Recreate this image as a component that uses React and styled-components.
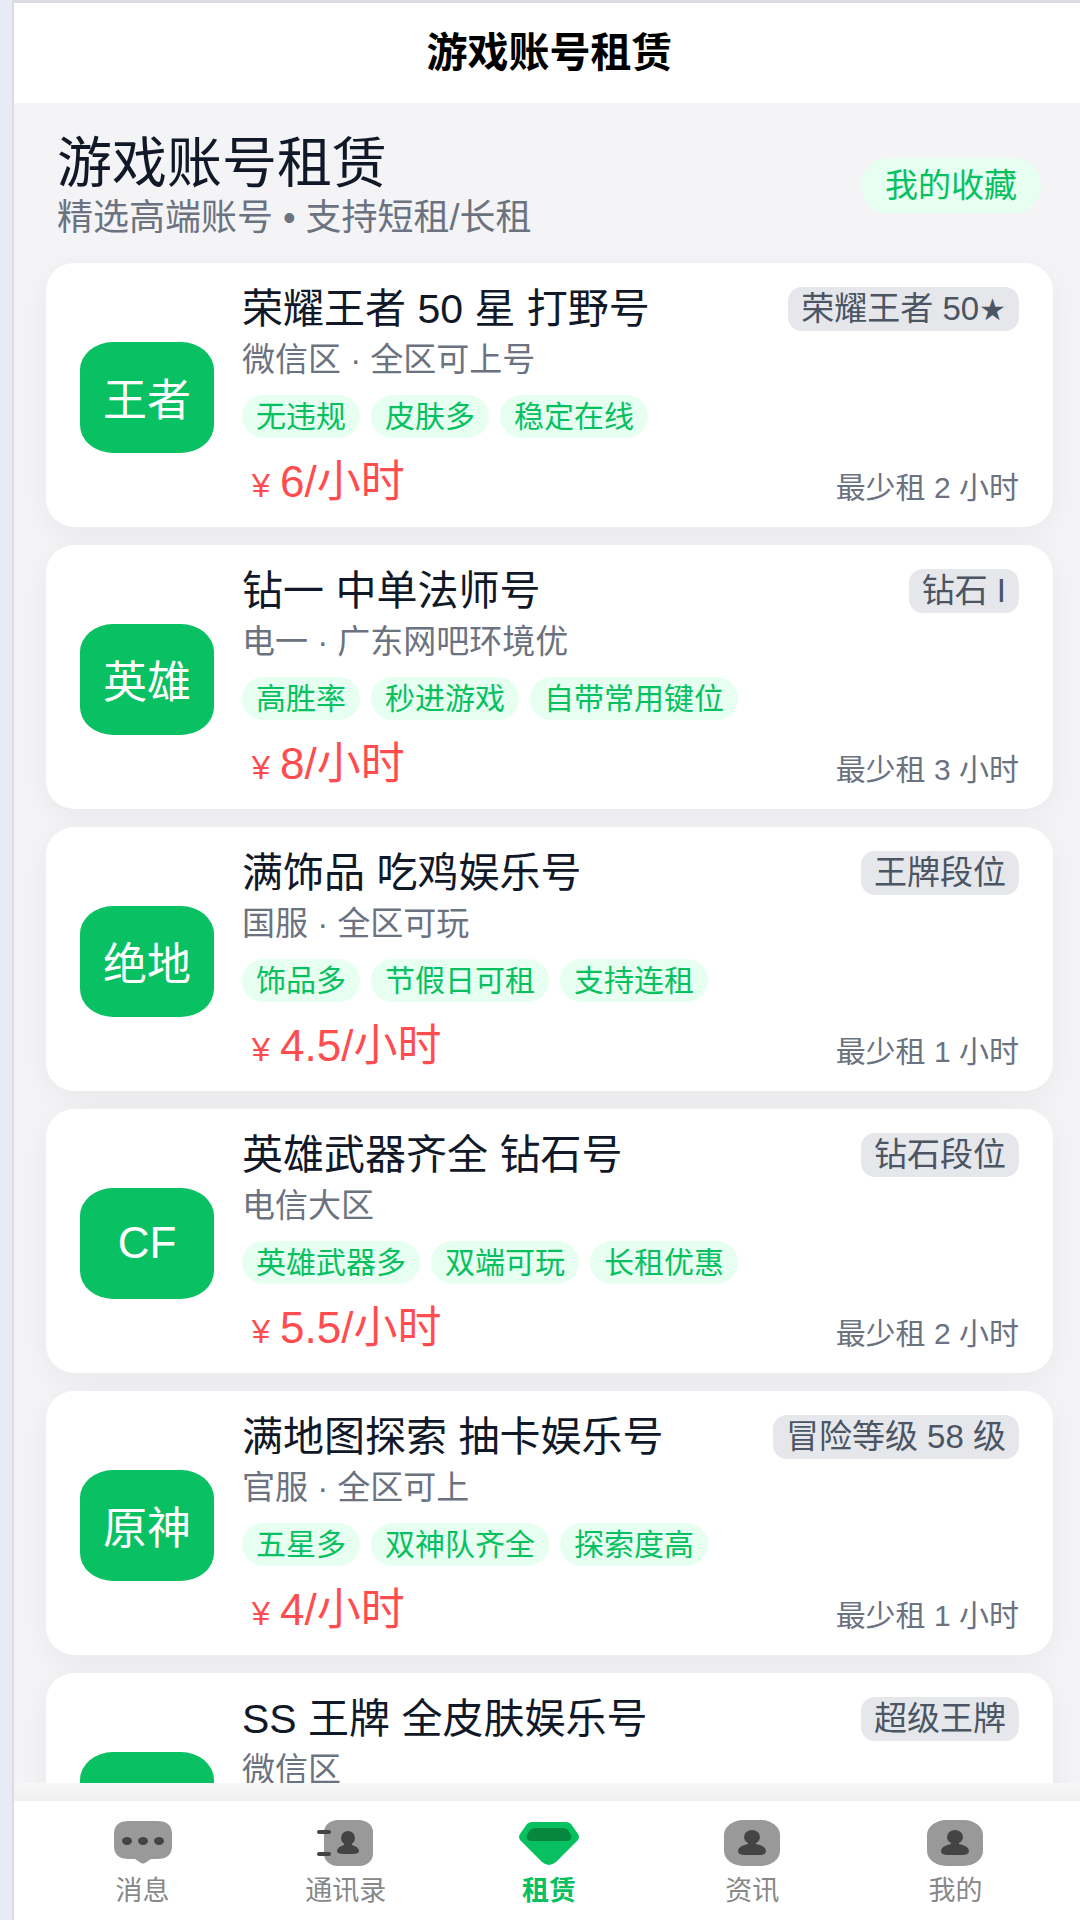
import React from "react";
import styled, { createGlobalStyle } from "styled-components";

const GlobalStyle = createGlobalStyle`
  * {
    box-sizing: border-box;
  }

  body {
    margin: 0;
    background-color: #e6ebf5;
    font-family: "Liberation Sans", "Noto Sans CJK SC", sans-serif;
  }
`;

const Container = styled.div`
  height: 100vh;
  margin-left: 12px;
  display: flex;
  flex-direction: column;
  overflow: hidden;
  border-top: 3px solid #dadce2;
  border-left: 2px solid #dadce2;
  background-color: #f4f4f6;
`;

const Header = styled.header`
  flex: none;
  height: 100px;
  padding: 0px 0px 9px 5px;
  display: flex;
  align-items: center;
  justify-content: center;
  background-color: white;
`;

const HeaderTitle = styled.h1`
  margin: 0;
  font-size: 41px;
  font-weight: 700;
  color: #000;
`;

const Content = styled.main`
  flex: 1;
  min-height: 0;
  overflow: hidden;
  padding: 31px 27px 0px 32px;
`;

const Intro = styled.section`
  padding: 0px 12px 27px 11px;
  display: flex;
  align-items: center;
  justify-content: space-between;
`;

const Title = styled.h2`
  margin: 0px 0px 8px;
  font-size: 55px;
  line-height: 58px;
  font-weight: 400;
  color: #111827;
`;

const Subtitle = styled.p`
  margin: 0;
  font-size: 36px;
  line-height: 36px;
  color: #6b7280;
`;

const FavButton = styled.button`
  padding: 0px 24px;
  border: none;
  border-radius: 28px;
  font-family: inherit;
  font-size: 33px;
  line-height: 55px;
  color: #07c160;
  background-color: #e6fff1;
  cursor: pointer;
`;

const List = styled.ul`
  margin: 0;
  padding: 0;
  list-style: none;
  display: flex;
  flex-direction: column;
  gap: 18px;
`;

const Card = styled.li`
  padding: 24px 34px 20px;
  display: flex;
  align-items: center;
  gap: 28px;
  border-radius: 28px;
  background-color: white;
  box-shadow: 0px 8px 32px rgba(0, 0, 0, 0.05);
`;

const Avatar = styled.div`
  flex: none;
  width: 134px;
  height: 111px;
  display: flex;
  align-items: center;
  justify-content: center;
  border-radius: 33px / 28px;
  font-size: 44px;
  color: white;
  background-color: #09c063;
`;

const Info = styled.div`
  flex: 1;
  min-width: 0;
`;

const Row = styled.div`
  display: flex;
  align-items: ${(props) => props.$align || "center"};
  justify-content: space-between;
`;

const Name = styled.h3`
  margin: 0;
  font-size: 41px;
  line-height: 44px;
  font-weight: 400;
  color: #111827;
`;

const Rank = styled.span`
  padding: 0px 13px;
  border-radius: 14px;
  font-size: 33px;
  line-height: 44px;
  color: #4b5563;
  background-color: #e5e7eb;
`;

const Star = styled.span`
  font-family: "DejaVu Sans", sans-serif;
  font-size: 30px;
  line-height: 1;
`;

const Region = styled.p`
  margin: 9px 0px 15px;
  font-size: 33px;
  line-height: 40px;
  color: #6b7280;
`;

const Tags = styled.div`
  margin-bottom: 19px;
  display: flex;
  gap: 11px;
`;

const Tag = styled.span`
  padding: 0px 14px;
  border-radius: 22px;
  font-size: 30px;
  line-height: 43px;
  color: #07c160;
  background-color: #e6fff1;
`;

const Price = styled.span`
  display: flex;
  align-items: baseline;
  height: 50px;
  font-size: 44px;
  line-height: 50px;
  color: #ff4d4f;
`;

const Currency = styled.span`
  width: 38px;
  font-size: 33px;
  text-align: center;
`;

const MinHours = styled.span`
  font-size: 30px;
  line-height: 38px;
  color: #6b7280;
`;

const NavShade = styled.div`
  flex: none;
  height: 18px;
  background: linear-gradient(#f7f7f7, #f0f0f0);
`;

const TabBar = styled.nav`
  flex: none;
  height: 119px;
  padding: 18px 23px 0px 27px;
  display: flex;
  background-color: white;
`;

const Tab = styled.a`
  flex: 1;
  display: flex;
  flex-direction: column;
  align-items: center;
  gap: 8px;
  font-size: 27px;
  line-height: 32px;
  font-weight: ${(props) => (props.$active ? 700 : 400)};
  color: ${(props) => (props.$active ? "#07c160" : "#888888")};
  text-decoration: none;
`;

const Icon = styled.svg`
  width: 64px;
  height: 48px;
`;

const ChatIcon = () => (
  <Icon viewBox="0 0 64 48">
    <path
      d="M18 2H46Q61 2 61 15V27Q61 40 46 40H40L34 44Q32 45 30 44L24 40H18Q3 40 3 27V15Q3 2 18 2Z"
      fill="#999"
    />
    <ellipse cx="16" cy="22" rx="5" ry="4" fill="#444" />
    <ellipse cx="32" cy="22" rx="5" ry="4" fill="#444" />
    <ellipse cx="48" cy="22" rx="5" ry="4" fill="#444" />
  </Icon>
);

const ContactsIcon = () => (
  <Icon viewBox="0 0 64 48">
    <rect x="10" y="1" width="49" height="46" rx="14" ry="12" fill="#999" />
    <path d="M5 13H15M5 35H15" stroke="#444" strokeWidth="4" strokeLinecap="round" />
    <ellipse cx="34" cy="19" rx="7" ry="7" fill="#444" />
    <path d="M30 22H38V26Q45 28 45 32Q45 35 39 35H29Q23 35 23 32Q23 28 30 26Z" fill="#444" />
  </Icon>
);

const DiamondIcon = () => (
  <Icon viewBox="0 0 64 48">
    <path
      d="M15 3H49Q52 3 54 5L61 15Q63 18 61 21L39 43Q32 49 25 43L3 21Q1 18 3 15L10 5Q12 3 15 3Z"
      fill="#07c160"
    />
    <path
      d="M19 9H45Q49 9 51 11L54 16Q55 18 54 20Q53 22 50 22H14Q11 22 10 20Q9 18 10 16L13 11Q15 9 19 9Z"
      fill="#05873f"
    />
  </Icon>
);

const PersonIcon = () => (
  <Icon viewBox="0 0 64 48">
    <rect x="4" y="1" width="56" height="46" rx="19" ry="15" fill="#999" />
    <ellipse cx="32" cy="18" rx="8" ry="7" fill="#444" />
    <path d="M28 21H36V25Q46 27 46 32Q46 36 39 36H25Q18 36 18 32Q18 27 28 25Z" fill="#444" />
  </Icon>
);

const accounts = [
  {
    game: "王者",
    name: "荣耀王者 50 星 打野号",
    rank: "荣耀王者 50",
    star: true,
    region: "微信区 · 全区可上号",
    tags: ["无违规", "皮肤多", "稳定在线"],
    price: 6,
    minHours: 2,
  },
  {
    game: "英雄",
    name: "钻一 中单法师号",
    rank: "钻石 I",
    region: "电一 · 广东网吧环境优",
    tags: ["高胜率", "秒进游戏", "自带常用键位"],
    price: 8,
    minHours: 3,
  },
  {
    game: "绝地",
    name: "满饰品 吃鸡娱乐号",
    rank: "王牌段位",
    region: "国服 · 全区可玩",
    tags: ["饰品多", "节假日可租", "支持连租"],
    price: 4.5,
    minHours: 1,
  },
  {
    game: "CF",
    name: "英雄武器齐全 钻石号",
    rank: "钻石段位",
    region: "电信大区",
    tags: ["英雄武器多", "双端可玩", "长租优惠"],
    price: 5.5,
    minHours: 2,
  },
  {
    game: "原神",
    name: "满地图探索 抽卡娱乐号",
    rank: "冒险等级 58 级",
    region: "官服 · 全区可上",
    tags: ["五星多", "双神队齐全", "探索度高"],
    price: 4,
    minHours: 1,
  },
  {
    game: "和平",
    name: "SS 王牌 全皮肤娱乐号",
    rank: "超级王牌",
    region: "微信区",
    tags: ["皮肤多"],
    price: 5,
    minHours: 2,
  },
];

const tabs = [
  { label: "消息", icon: ChatIcon },
  { label: "通讯录", icon: ContactsIcon },
  { label: "租赁", icon: DiamondIcon, active: true },
  { label: "资讯", icon: PersonIcon },
  { label: "我的", icon: PersonIcon },
];

const Account = ({ item }) => {
  return (
    <Card>
      <Avatar>{item.game}</Avatar>
      <Info>
        <Row>
          <Name>{item.name}</Name>
          <Rank>
            {item.rank}
            {item.star && <Star>★</Star>}
          </Rank>
        </Row>
        <Region>{item.region}</Region>
        <Tags>
          {item.tags.map((tag) => (
            <Tag key={tag}>{tag}</Tag>
          ))}
        </Tags>
        <Row $align="flex-end">
          <Price>
            <Currency>¥</Currency>
            {item.price}/小时
          </Price>
          <MinHours>最少租 {item.minHours} 小时</MinHours>
        </Row>
      </Info>
    </Card>
  );
};

const App = () => {
  return (
    <>
      <GlobalStyle />
      <Container>
        <Header>
          <HeaderTitle>游戏账号租赁</HeaderTitle>
        </Header>
        <Content>
          <Intro>
            <div>
              <Title>游戏账号租赁</Title>
              <Subtitle>精选高端账号 • 支持短租/长租</Subtitle>
            </div>
            <FavButton type="button">我的收藏</FavButton>
          </Intro>
          <List>
            {accounts.map((item) => (
              <Account key={item.name} item={item} />
            ))}
          </List>
        </Content>
        <NavShade />
        <TabBar>
          {tabs.map(({ label, icon: TabIcon, active }) => (
            <Tab key={label} href="#" $active={active}>
              <TabIcon />
              {label}
            </Tab>
          ))}
        </TabBar>
      </Container>
    </>
  );
};

export default App;
